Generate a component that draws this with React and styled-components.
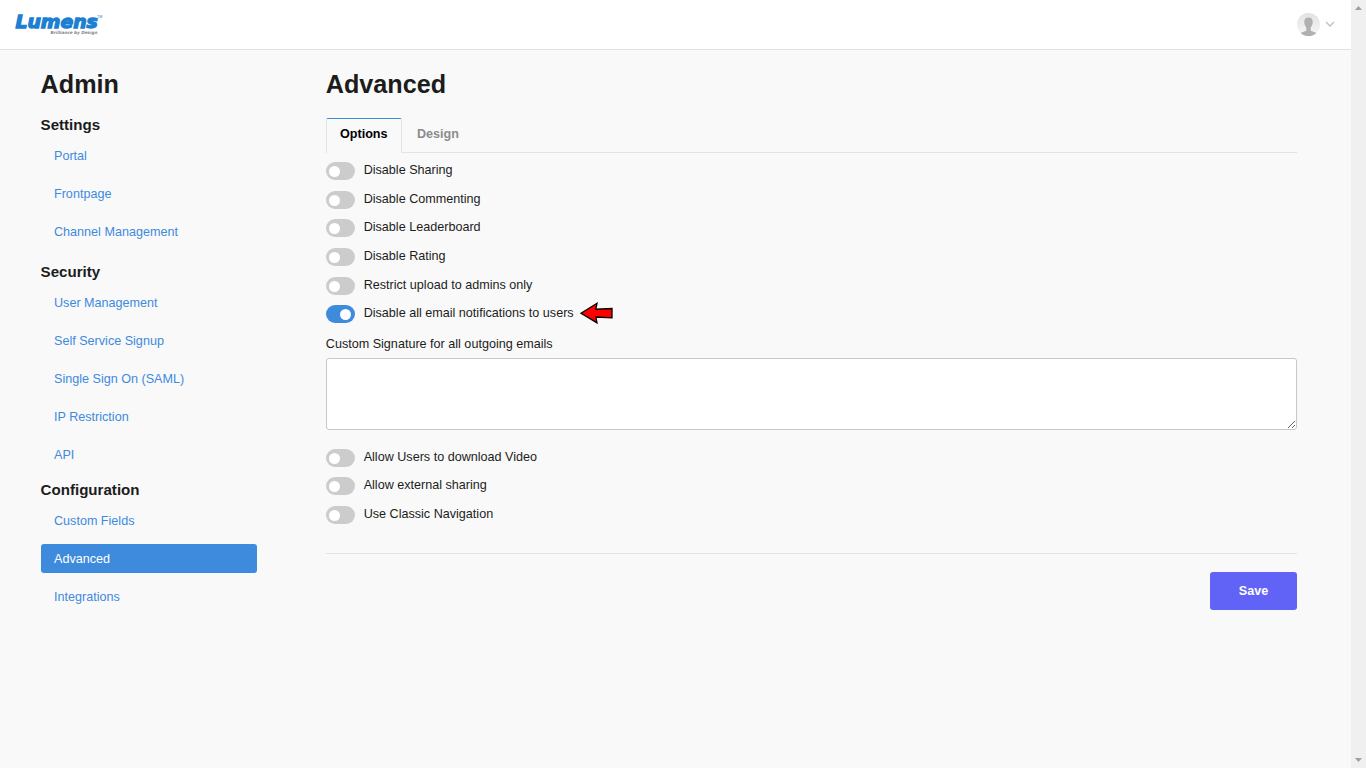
import React from "react";
import styled, { createGlobalStyle } from "styled-components";

const Global = createGlobalStyle`
  * { box-sizing: border-box; }
  body { margin: 0; background: #f9f9f9; overflow: hidden; }
  body, textarea, button { font-family: "Liberation Sans", Arial, sans-serif; font-size: 12.6px; color: #1c1c1c; }
`;

const Shell = styled.div`
  display: flex;
  height: 768px;
`;
const Page = styled.div`
  flex: 1;
  display: flex;
  flex-direction: column;
`;
const Header = styled.header`
  height: 50px;
  background: #fff;
  border-bottom: 1px solid #e1e1e1;
  display: flex;
  justify-content: space-between;
  padding: 0 16px 0 10px;
`;
const Account = styled.div`
  display: flex;
  align-items: center;
  gap: 5px;
  height: 48px;
`;
const Columns = styled.div`
  display: flex;
  padding: 0 54px 0 40.6px;
`;
const Sidebar = styled.aside`
  width: 216px;
  margin-right: 69.2px;
`;
const Title = styled.h1`
  margin: 18px 0 0;
  font-size: 25.2px;
  line-height: 32px;
  font-weight: bold;
`;
const Group = styled.section`
  padding-top: ${(p) => p.$top}px;
`;
const GroupTitle = styled.h2`
  margin: 0 0 6px;
  font-size: 15.1px;
  line-height: 20px;
  font-weight: bold;
`;
const Links = styled.nav`
  display: flex;
  flex-direction: column;
  gap: 9px;
`;
const NavLink = styled.a`
  height: 29px;
  line-height: 31px;
  padding-left: 13.4px;
  border-radius: 3px;
  color: ${(p) => (p.$active ? "#fff" : "#3e8ade")};
  background: ${(p) => (p.$active ? "#3e8bdd" : "transparent")};
`;
const Main = styled.main`
  flex: 1;
`;
const Tabs = styled.div`
  display: flex;
  gap: 1px;
  height: 35px;
  margin: 18px 0 9px;
  border-bottom: 1px solid #e3e3e3;
`;
const Tab = styled.div`
  height: 35px;
  line-height: 31px;
  padding: 0 13.2px;
  font-weight: bold;
  color: ${(p) => (p.$active ? "#000" : "#8c8c8c")};
  border: 1px solid ${(p) => (p.$active ? "#e3e3e3" : "transparent")};
  border-top-color: ${(p) => (p.$active ? "#3e8bdd" : "transparent")};
  border-bottom: 0;
  border-radius: 2px 2px 0 0;
  background: ${(p) => (p.$active ? "#f9f9f9" : "transparent")};
`;
const Option = styled.div`
  display: flex;
  height: 28.67px;
`;
const Track = styled.span`
  width: 29px;
  height: 18px;
  padding: 4px 4px 0 3px;
  border-radius: 9px;
  background: ${(p) => (p.$on ? "#3e8bdd" : "#ccc")};
  display: flex;
  justify-content: ${(p) => (p.$on ? "flex-end" : "flex-start")};
`;
const Knob = styled.span`
  width: 11px;
  height: 11px;
  border-radius: 50%;
  background: #fff;
`;
const OptionText = styled.span`
  margin-left: 8.9px;
  line-height: 16px;
`;
const Pointer = styled.svg`
  display: block;
  margin: -4px 0 0 5.3px;
`;
const FieldLabel = styled.label`
  display: block;
  line-height: 16px;
  margin: 2px 0 6px;
`;
const Signature = styled.textarea`
  display: block;
  width: 100%;
  height: 72px;
  margin-bottom: 18.75px;
  border: 1px solid #c8c8c8;
  border-radius: 3px;
  background: #fff;
  resize: vertical;
`;
const Actions = styled.div`
  display: flex;
  justify-content: flex-end;
  margin-top: 18.2px;
  padding-top: 18px;
  border-top: 1px solid #e3e3e3;
`;
const SaveButton = styled.button`
  width: 87px;
  height: 38px;
  padding: 0;
  border: 0;
  border-radius: 3px;
  background: #6163f6;
  color: #fff;
  font-weight: bold;
`;
const Scrollbar = styled.div`
  width: 15px;
  background: #f0f0f0;
  display: flex;
  flex-direction: column;
  justify-content: space-between;
  align-items: center;
  padding: 6px 0;
`;

const groups = [
  { title: "Settings", top: 15, links: ["Portal", "Frontpage", "Channel Management"] },
  { title: "Security", top: 16, links: ["User Management", "Self Service Signup", "Single Sign On (SAML)", "IP Restriction", "API"] },
  { title: "Configuration", top: 11, links: ["Custom Fields", "Advanced", "Integrations"] },
];
const options = [
  "Disable Sharing",
  "Disable Commenting",
  "Disable Leaderboard",
  "Disable Rating",
  "Restrict upload to admins only",
];
const moreOptions = ["Allow Users to download Video", "Allow external sharing", "Use Classic Navigation"];

function Logo() {
  return (
    <svg width="96" height="40" viewBox="0 0 96 40">
      <text x="5.5" y="28.2" textLength="82.3" lengthAdjust="spacingAndGlyphs" fontFamily="DejaVu Sans" fontWeight="bold" fontStyle="italic" fontSize="18.4" fill="#1b80d2" stroke="#1b80d2" strokeWidth="1.3">Lumens</text>
      <text x="87" y="17.5" fontFamily="Liberation Sans" fontSize="3.6" fill="#1b80d2">TM</text>
      <text x="40.5" y="34" textLength="47" lengthAdjust="spacingAndGlyphs" fontFamily="DejaVu Sans" fontWeight="bold" fontStyle="italic" fontSize="4.3" fill="#888">Brilliance by Design</text>
    </svg>
  );
}

function Avatar() {
  return (
    <svg width="23" height="23" viewBox="0 0 23 23">
      <defs>
        <clipPath id="disc"><circle cx="11.5" cy="11.5" r="11.5" /></clipPath>
        <linearGradient id="shade" x1="0" y1="0" x2="0" y2="1">
          <stop offset="0" stopColor="#e2e2e2" />
          <stop offset="1" stopColor="#f7f7f7" />
        </linearGradient>
      </defs>
      <g clipPath="url(#disc)">
        <rect width="23" height="23" fill="url(#shade)" />
        <path d="M11.5 4.5c-2.8 0-4.4 1.8-4.2 4.6.1 2.3.8 4.2 2 5.3v3.1C8.4 18.8 4 18.8 3 21v3h17v-3c-1-2.2-5.4-2.2-6.3-3.5v-3.1c1.2-1.1 1.9-3 2-5.3.2-2.8-1.4-4.6-4.2-4.6z" fill="#b0b0b0" />
      </g>
    </svg>
  );
}

function Toggle({ label, on, children }) {
  return (
    <Option>
      <Track $on={on}><Knob /></Track>
      <OptionText>{label}</OptionText>
      {children}
    </Option>
  );
}

export default function App() {
  return (
    <Shell>
      <Global />
      <Page>
        <Header>
          <Logo />
          <Account>
            <Avatar />
            <svg width="10" height="7" viewBox="0 0 10 7">
              <path d="M1 1l4 4 4-4" fill="none" stroke="#c0c0c0" strokeWidth="1.3" />
            </svg>
          </Account>
        </Header>
        <Columns>
          <Sidebar>
            <Title>Admin</Title>
            {groups.map((g) => (
              <Group key={g.title} $top={g.top}>
                <GroupTitle>{g.title}</GroupTitle>
                <Links>
                  {g.links.map((l) => <NavLink key={l} $active={l === "Advanced"}>{l}</NavLink>)}
                </Links>
              </Group>
            ))}
          </Sidebar>
          <Main>
            <Title>Advanced</Title>
            <Tabs>
              <Tab $active>Options</Tab>
              <Tab>Design</Tab>
            </Tabs>
            {options.map((o) => <Toggle key={o} label={o} />)}
            <Toggle label="Disable all email notifications to users" on>
              <Pointer width="36" height="24" viewBox="0 0 36 24">
                <path d="M2 12.2L18 2.3l-1.2 5.900 16.2-.7v9.400l-16.2-.9 1.2 5.900z" fill="#f00" stroke="#000" strokeWidth="1.3" />
              </Pointer>
            </Toggle>
            <FieldLabel>Custom Signature for all outgoing emails</FieldLabel>
            <Signature />
            {moreOptions.map((o) => <Toggle key={o} label={o} />)}
            <Actions><SaveButton>Save</SaveButton></Actions>
          </Main>
        </Columns>
      </Page>
      <Scrollbar>
        <svg width="7" height="4" viewBox="0 0 7 4"><path d="M0 4L3.5 0 7 4z" fill="#a0a0a0" /></svg>
        <svg width="7" height="4" viewBox="0 0 7 4"><path d="M0 0L3.5 4 7 0z" fill="#a0a0a0" /></svg>
      </Scrollbar>
    </Shell>
  );
}
